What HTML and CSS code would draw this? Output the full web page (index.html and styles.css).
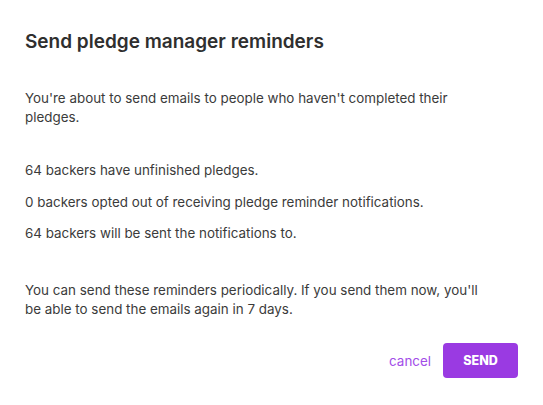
FILE: index.html
```html
<!DOCTYPE html>
<html>
<head>
<meta charset="utf-8">
<link rel="stylesheet" href="styles.css">
</head>
<body>
<div class="modal">
  <h2 class="title">Send pledge manager reminders</h2>
  <p class="intro">You're about to send emails to people who haven't completed their pledges.</p>
  <div class="stats">
    <p class="stat">64 backers have unfinished pledges.</p>
    <p class="stat">0 backers opted out of receiving pledge reminder notifications.</p>
    <p class="stat">64 backers will be sent the notifications to.</p>
  </div>
  <p class="note">You can send these reminders periodically. If you send them now, you'll be able to send the emails again in 7 days.</p>
  <div class="actions">
    <button class="cancel">cancel</button>
    <button class="send">SEND</button>
  </div>
</div>
</body>
</html>
```

FILE: styles.css
```css
html, body {
  margin: 0;
  background: #ffffff;
}
body {
  font-family: Inter, "Noto Sans", sans-serif;
  color: #3b3b3b;
}
.modal {
  width: 543px;
  height: 405px;
  box-sizing: border-box;
  padding: 29px 25px 0 25px;
}
.title {
  margin: 0;
  font-size: 19px;
  line-height: 26px;
  font-weight: 600;
  color: #2f2f2f;
}
.intro {
  margin: 34px 0 0 0;
  font-size: 13.4px;
  line-height: 19px;
  width: 450px;
}
.stats {
  margin-top: 34px;
  display: flex;
  flex-direction: column;
  gap: 12.5px;
}
.stat {
  margin: 0;
  font-size: 13.4px;
  line-height: 19px;
}
.note {
  margin: 38px 0 0 0;
  font-size: 13.4px;
  line-height: 19px;
  width: 460px;
}
.actions {
  margin-top: 24px;
  display: flex;
  justify-content: flex-end;
  align-items: center;
  gap: 12px;
}
.cancel {
  border: none;
  background: none;
  padding: 0;
  font-family: inherit;
  font-size: 13.4px;
  color: #a24de8;
  cursor: pointer;
}
.send {
  width: 75px;
  height: 35px;
  border: none;
  border-radius: 4px;
  background: #9a3ae2;
  color: #ffffff;
  font-family: inherit;
  font-size: 12.5px;
  font-weight: 800;
  cursor: pointer;
}
```
